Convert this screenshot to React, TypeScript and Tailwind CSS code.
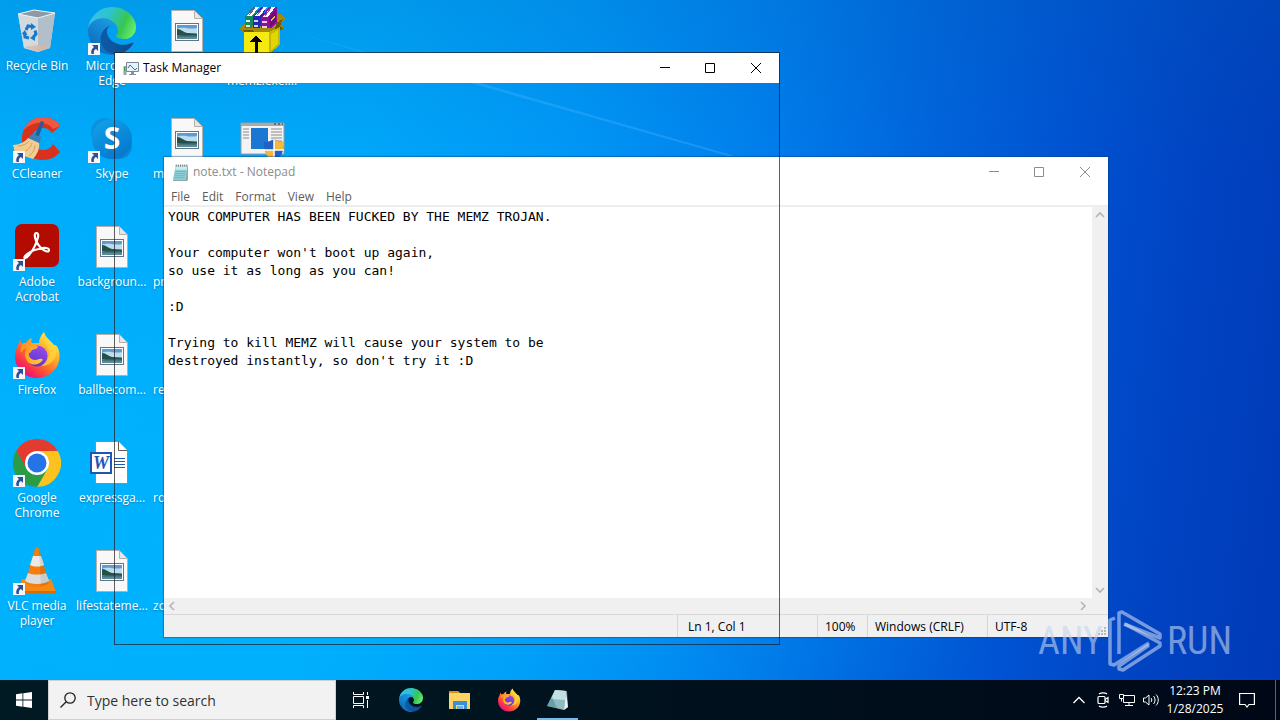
import React, { useState } from "react";

type IconProps = { className?: string };

/* ---------- Application icons ---------- */

function RecycleBinIcon({ className }: IconProps) {
  return (
    <svg viewBox="0 0 48 48" className={className} aria-hidden="true">
      <path d="M5 7 21 3 42 6 37 41 25 45 11 41z" fill="#c9d3da" />
      <path d="M5 7 25 11 25 45 11 41z" fill="#d3dade" />
      <path d="M25 11 42 6 37 41 25 45z" fill="#b3bfc8" />
      <path d="M5 7 21 3 42 6 25 11z" fill="#8d9aa5" stroke="#eef3f6" strokeWidth="1" />
      <path d="M11 40 25 38 37 40 25 45z" fill="#d9b8a4" opacity="0.8" />
      <g fill="none" stroke="#1878cf" strokeWidth="3">
        <path d="M13 23 15 19 18.500 19.500" />
        <path d="M22 23.500 23 27 20.500 30" />
        <path d="M16 31 12 30 11.500 27" />
      </g>
      <path d="M18 16 23 20 18 23zM22 27v7l-5-3zM8.500 27l3.500-4 2.500 5z" fill="#1878cf" />
    </svg>
  );
}

function EdgeIcon({ className }: IconProps) {
  return (
    <svg viewBox="0 0 256 256" className={className} aria-hidden="true">
      <defs>
        <linearGradient id="edge-a" x1="0.2" y1="0.5" x2="1" y2="0.5">
          <stop offset="0" stopColor="#0c59a4" />
          <stop offset="1" stopColor="#114a8b" />
        </linearGradient>
        <linearGradient id="edge-b" x1="0.8" y1="0.1" x2="0.2" y2="1">
          <stop offset="0" stopColor="#1b9de2" />
          <stop offset="0.5" stopColor="#1383d0" />
          <stop offset="1" stopColor="#0b62b4" />
        </linearGradient>
        <linearGradient id="edge-c" x1="0" y1="0.3" x2="1" y2="0.6">
          <stop offset="0" stopColor="#35c1f1" />
          <stop offset="0.4" stopColor="#2ec3c8" />
          <stop offset="0.75" stopColor="#36c752" />
          <stop offset="1" stopColor="#66eb6e" />
        </linearGradient>
      </defs>
      <path
        fill="url(#edge-a)"
        d="M235.680 190.530a93.730 93.730 0 01-10.540 4.710 101.870 101.870 0 01-35.900 6.460c-47.320 0-88.540-32.550-88.540-74.320 0-11.410 6.380-21.860 16.600-27.440-42.800 1.800-53.800 46.400-53.800 72.530 0 73.880 68.090 81.370 82.760 81.370 7.910 0 19.840-2.300 27-4.560l1.310-.44a128.340 128.340 0 0066.600-52.800 4 4 0 00-5.490-5.510z"
      />
      <path
        fill="url(#edge-b)"
        d="M105.730 241.420A79.200 79.200 0 0183 220.080a80.720 80.720 0 0129.500-120.450c3.120-1.470 8.450-4.130 15.540-4a32.350 32.350 0 0125.690 13 31.880 31.880 0 016.360 18.660c0-.21 24.460-79.600-80-79.600-43.900 0-80 41.660-80 78.210a130.150 130.150 0 0012.110 56 128 128 0 00156.380 67.110 75.550 75.550 0 01-62.780-8z"
      />
      <path
        fill="url(#edge-c)"
        d="M152.330 148.860c-.81 1.050-3.300 2.500-3.300 5.660 0 2.610 1.700 5.120 4.720 7.230 14.380 10 41.490 8.680 41.560 8.680a59.560 59.560 0 0030.270-8.350A61.380 61.380 0 00256 109.200c.26-22.410-8-37.310-11.340-43.910C223.460 23.840 177.720 0 128 0A128 128 0 000 126.200c.48-36.540 36.800-66.050 80-66.050 3.500 0 23.460.34 42 10.070 16.340 8.580 24.900 18.940 30.850 29.210 6.180 10.670 7.280 24.150 7.280 29.520s-2.740 13.330-7.800 19.910z"
      />
    </svg>
  );
}

function ImageFileIcon({ className }: IconProps) {
  return (
    <svg viewBox="0 0 48 48" className={className} aria-hidden="true">
      <path d="M8.500 3.500h23l8 8v33h-31z" fill="#f8f8f8" stroke="#b5b0aa" />
      <path d="M31.500 3.500v8h8z" fill="#e2e6ea" stroke="#b5b0aa" strokeLinejoin="round" />
      <rect x="12.500" y="16.500" width="23" height="17" fill="#fff" stroke="#5f7486" />
      <rect x="14" y="18" width="20" height="14" fill="#5e9cd0" />
      <path d="M14 22c6-3 13 1 20-1v5H14z" fill="#bcdcf0" />
      <path d="M14 22c4 0 6 3 10 4 4 0 7 1 10 1v1H14z" fill="#245049" />
      <path d="M14 28h20v4H14z" fill="#5b8a94" />
      <path d="M14 29c6-2 12 0 20-1v1.500H14z" fill="#2f6068" />
    </svg>
  );
}

function WinrarIcon({ className }: IconProps) {
  return (
    <svg viewBox="0 0 48 48" className={className} shapeRendering="crispEdges" aria-hidden="true">
      <path d="M2 22 8 15 42 7 47 12 42 17 46 20 38 26 8 26z" fill="#a58a05" />
      <path d="M4 23h10l3 3H8zM38 16l7-4-3 7 3 3-8 3z" fill="#6e5a00" />
      <path d="M7 10 15 0h5l-6 21H7z" fill="#178a5c" />
      <path d="M8 13h4v2H8zM8 18h4v2H8z" fill="#e8e8e8" />
      <path d="M15 10 23 0h5l-6 21h-7z" fill="#2229b8" />
      <path d="M16 13h4v2h-4zM16 18h4v2h-4z" fill="#d5d0ff" />
      <path d="M23 11 31 0h8v15l-6 6H23z" fill="#8d1196" />
      <path d="M24 14h5v2h-5zM24 19h5v2h-5z" fill="#f0c8f0" />
      <path d="M31 11 38 2v12l-6 7z" fill="#6c0d78" />
      <path d="M33 12l4-4v2l-4 4z" fill="#f0c040" />
      <path d="M9 9 17 0h4l-7 9zM17 9 25 0h4l-7 9zM25 10 33 0h4l-7 10z" fill="#fff" />
      <path d="M11 8 17 1M19 8 25 1M27 9 33 1" stroke="#8a5ab0" />
      <path d="M6 25h25v22H6z" fill="#f5ea10" />
      <path d="M31 25 42 20v18l-11 9z" fill="#c4b800" />
      <path d="M33 27 40 23v14l-7 6z" fill="#e3d600" />
      <path d="M17 47V35h-5l6-7 6 7h-4v12z" fill="#000" />
    </svg>
  );
}

function CCleanerIcon({ className }: IconProps) {
  return (
    <svg viewBox="0 0 48 48" className={className} aria-hidden="true">
      <path
        d="M47 11C43 5 37 2 30 2 18 2 9 12 9 24s9 21 20 21c8 0 14-3 18-8l-7-8c-2 4-6 6-10 6-6 0-11-5-11-11s5-11 11-11c4 0 7 2 9 5z"
        fill="#d8321f"
      />
      <path d="M47 11C43 5 37 2 30 2 20 2 13 8 10 16c6-7 14-9 20-8 5 1 8 3 10 6z" fill="#f0593f" />
      <path d="M28 6 31 7 25 24 21 22z" fill="#1f5f9e" />
      <path d="M20 19 28 22c0 4-2 6-3 7l-10-5c1-2 3-4 5-5z" fill="#3c7fb8" />
      <path d="M15 23 26 28c1 5-2 12-6 16L2 38l-2-8c6 0 12-3 15-7z" fill="#f2cd93" />
      <path d="M5 31c4 0 9-2 11-5M9 38c5-2 9-6 10-10M16 41c4-3 6-7 6-11" stroke="#d59f54" fill="none" />
    </svg>
  );
}

function SkypeIcon({ className }: IconProps) {
  return (
    <svg viewBox="0 0 48 48" className={className} aria-hidden="true">
      <defs>
        <linearGradient id="skype-a" x1="0" y1="0" x2="0.6" y2="1">
          <stop offset="0" stopColor="#12a5ea" />
          <stop offset="1" stopColor="#0579cf" />
        </linearGradient>
      </defs>
      <circle cx="17" cy="17" r="14" fill="#0a93dc" />
      <circle cx="31" cy="31" r="13" fill="#0a86d6" />
      <circle cx="24" cy="24" r="20" fill="url(#skype-a)" />
      <text
        x="24"
        y="34"
        textAnchor="middle"
        fill="#fff"
        className="font-['Open_Sans',sans-serif] text-[30px] font-bold"
      >
        S
      </text>
    </svg>
  );
}

function InstallerIcon({ className }: IconProps) {
  return (
    <svg viewBox="0 0 48 48" className={className} aria-hidden="true">
      <path d="M3 8h43v31H3z" fill="#f3f3f3" stroke="#9a9a9a" />
      <path d="M3 8h43v3H3z" fill="#a9a9a9" />
      <path d="M36 9h2M40 9h2M44 9h1" stroke="#333" />
      <path d="M5 14h6M5 17h6M5 20h6M5 23h6M33 14h11M33 17h11M33 20h11M33 23h11M33 26h11" stroke="#8b8b8b" />
      <path d="M13 13h17v21H13z" fill="#1b77d2" />
      <path d="M26 27c4 0 7-1 10-3 3 2 6 3 10 3 0 10-3 16-10 19-7-3-10-9-10-19z" fill="#2160c4" />
      <path d="M36 24c3 2 6 3 10 3 0 3 0 6-1 8h-9zM36 35v11c-6-3-8-6-9-11z" fill="#f5b73c" />
      <path d="M36 24v22M26 35h20" stroke="#fff" strokeWidth="1.500" />
    </svg>
  );
}

function AcrobatIcon({ className }: IconProps) {
  return (
    <svg viewBox="0 0 48 48" className={className} aria-hidden="true">
      <rect x="2" y="1" width="44" height="43" rx="7" fill="#b30b00" />
      <path
        d="M12 33c3-3 8-6 14-7 6-2 10-1 10 1 0 3-5 1-8-2-4-4-7-10-6-14 1-2 4-1 3 3-1 5-5 14-9 18-3 4-6 4-4 1z"
        fill="none"
        stroke="#fff"
        strokeWidth="2.200"
        strokeLinejoin="round"
      />
    </svg>
  );
}

function FirefoxIcon({ className }: IconProps) {
  return (
    <svg viewBox="0 0 48 48" className={className} aria-hidden="true">
      <defs>
        <linearGradient id="ff-a" x1="0.85" y1="0.1" x2="0.2" y2="0.9">
          <stop offset="0" stopColor="#fff44f" />
          <stop offset="0.3" stopColor="#ffb12c" />
          <stop offset="0.6" stopColor="#ff6a2a" />
          <stop offset="0.85" stopColor="#fb2c4f" />
          <stop offset="1" stopColor="#e31587" />
        </linearGradient>
        <linearGradient id="ff-b" x1="0.8" y1="0" x2="0.4" y2="1">
          <stop offset="0" stopColor="#9b4bf0" />
          <stop offset="1" stopColor="#5a36c8" />
        </linearGradient>
        <linearGradient id="ff-c" x1="0" y1="0" x2="1" y2="0.6">
          <stop offset="0" stopColor="#ff8a1e" />
          <stop offset="1" stopColor="#ffc13a" />
        </linearGradient>
      </defs>
      <path
        d="M31 1c1 5 6 8 10 13 3-1 6 6 5.500 12C46 38 36 47 24 47S2 38 2 25c0-4 1-7 3-10 0-2 1-4 3-6 0 2 0 3 1 4l4-1c1-2 3-4 6-5-1 2-1 4 0 5h7c0-4 2-8 5-11z"
        fill="url(#ff-a)"
      />
      <circle cx="24" cy="25" r="10.500" fill="url(#ff-b)" />
      <path
        d="M9 13c4-2 7-1 9 0 3 0 6 1 7 3-1 2-4 2-6 3-1 1-1 3-3 3-1 3 2 7 6 7 3 0 4-2 7-1 1 0 1 1 0 2-4 5-13 5-16-2-2-4-1-9 1-11-3 0-5 3-6 5-1-4 0-7 1-9z"
        fill="url(#ff-c)"
      />
      <path d="M31 1c-2 8 5 12 5 21 0 5-3 10-8 13 10 0 16-7 15-15 0-7-10-10-12-19z" fill="#ffd53c" opacity="0.75" />
    </svg>
  );
}

function ChromeIcon({ className }: IconProps) {
  return (
    <svg viewBox="0 0 48 48" className={className} aria-hidden="true">
      <path d="M24 12H44.800A24 24 0 0 0 3.200 12L13.600 30z" fill="#e33b2e" />
      <path d="M24 12H44.800A24 24 0 0 1 24 48L34.400 30z" fill="#fcc31e" />
      <path d="M13.600 30 3.200 12A24 24 0 0 0 24 48L34.400 30z" fill="#2a9c47" />
      <circle cx="24" cy="24" r="12" fill="#fff" />
      <circle cx="24" cy="24" r="9.500" fill="#2673e8" />
    </svg>
  );
}

function WordFileIcon({ className }: IconProps) {
  return (
    <svg viewBox="0 0 48 48" className={className} aria-hidden="true">
      <path d="M7.500 2.500h23l9 9v33h-32z" fill="#fff" stroke="#8b8b8b" />
      <path d="M30.500 2.500v9h9" fill="#fff" stroke="#6b5a50" />
      <path d="M26 19.500h11M26 22.500h11M26 25.500h11M26 28.500h11" stroke="#1f5bb5" />
      <rect x="3" y="14" width="20" height="20" fill="#fff" stroke="#1f56b3" strokeWidth="2" />
      <text
        x="13"
        y="30"
        textAnchor="middle"
        fill="#1f56b3"
        className="font-['Liberation_Serif',serif] text-[18px] font-bold italic"
      >
        W
      </text>
    </svg>
  );
}

function VlcIcon({ className }: IconProps) {
  return (
    <svg viewBox="0 0 48 48" className={className} aria-hidden="true">
      <path d="M9 32h29l5 13H5z" fill="#f58a12" />
      <path d="M5 44h38v2H5z" fill="#d96a00" />
      <path d="M22 2c1-2 3-2 4 0l10 34c-4 5-20 5-24 0z" fill="#f57c0d" />
      <path d="M20 9h8l3 9c-4 2-10 2-14 0z" fill="#e9e9e9" />
      <path d="M15 26c5 2 13 2 18 0l3 8c-5 4-19 4-24 0z" fill="#dcdcdc" />
      <path d="M26 2l10 34c-2 2-5 3-8 3z" fill="#000" opacity="0.08" />
    </svg>
  );
}

function NotepadIcon({ className }: IconProps) {
  return (
    <svg viewBox="0 0 16 16" className={className} aria-hidden="true">
      <path d="M4 2h11v13l-1 1H1z" fill="#3f6d73" opacity="0.6" />
      <path d="M3.500 1.500h11L13 15H.8z" fill="#8fd0d8" />
      <path d="M3.500 1.500h11l-.5 4H3z" fill="#c9ecef" />
      <path d="M3 7h10M2.700 9h10M2.400 11h10M2 13h10" stroke="#5aa9b4" strokeWidth="0.600" />
      <path d="M4 .5v2M6 .5v2M8 .5v2M10 .5v2M12 .5v2M14 .5v2" stroke="#5b6669" strokeWidth="0.800" />
    </svg>
  );
}

function NotepadTaskIcon({ className }: IconProps) {
  return (
    <svg viewBox="0 0 24 24" className={className} aria-hidden="true">
      <path d="M9 2 21 3l1 16-4 3z" fill="#5f7f86" />
      <path d="M9 2 20 3 18 22 1 18z" fill="#8dbcc2" />
      <path d="M9 2 20 3 19 12 5 11z" fill="#c2dfe2" />
      <path d="M1 18 6 9l5 11z" fill="#4f8d98" opacity="0.6" />
      <path d="M20 3l2 16-4 3z" fill="#e9f3f4" />
    </svg>
  );
}

function TaskManagerIcon({ className }: IconProps) {
  return (
    <svg viewBox="0 0 16 16" className={className} aria-hidden="true">
      <path d="M.5 6h3v9h-3z" fill="#9aa3a8" />
      <path d="M1 7h1v4H1z" fill="#37a64a" />
      <path d="M3.500 2.500h12v9h-12z" fill="#e6f3fa" stroke="#7a8891" />
      <path d="M5 8l2-3 3 3 2 2 2-2" fill="none" stroke="#1f7ab5" />
      <path d="M8 12h3v2h2v1H6v-1h2z" fill="#87929a" />
    </svg>
  );
}

function FolderIcon({ className }: IconProps) {
  return (
    <svg viewBox="0 0 24 24" className={className} aria-hidden="true">
      <path d="M1 3h9l2 2h10v3H1z" fill="#e5a323" />
      <path d="M1 5h21v16H1z" fill="#fcd462" />
      <path d="M1 3h9l2 2H1z" fill="#d9901a" />
      <path d="M5 13h14v8h-3v-4H8v4H5z" fill="#3b8fd6" />
      <path d="M9 18h6v3H9z" fill="#6fb3e6" />
    </svg>
  );
}

function ShortcutArrow() {
  return (
    <svg viewBox="0 0 12 12" className="absolute bottom-0 left-0 size-3" aria-hidden="true">
      <path d="M0 0h12v12H0z" fill="#f4f6fa" />
      <path d="M4 2h6v6L8 6C6 7 5.500 8.500 6 11H3.500C2.500 8 4 5.500 6 4z" fill="#2c4f96" />
    </svg>
  );
}

/* ---------- Desktop ---------- */

interface DesktopItem {
  label: string;
  Icon: React.ComponentType<IconProps>;
  shortcut?: boolean;
  alignStart?: boolean;
}

const DESKTOP_ITEMS: DesktopItem[] = [
  { label: "Recycle Bin", Icon: RecycleBinIcon },
  { label: "CCleaner", Icon: CCleanerIcon, shortcut: true },
  { label: "Adobe\nAcrobat", Icon: AcrobatIcon, shortcut: true },
  { label: "Firefox", Icon: FirefoxIcon, shortcut: true },
  { label: "Google\nChrome", Icon: ChromeIcon, shortcut: true },
  { label: "VLC media\nplayer", Icon: VlcIcon, shortcut: true },
  { label: "Microsoft\nEdge", Icon: EdgeIcon, shortcut: true },
  { label: "Skype", Icon: SkypeIcon, shortcut: true },
  { label: "backgroun...", Icon: ImageFileIcon },
  { label: "ballbecom...", Icon: ImageFileIcon },
  { label: "expressga...", Icon: WordFileIcon },
  { label: "lifestateme...", Icon: ImageFileIcon },
  { label: "", Icon: ImageFileIcon },
  { label: "m", Icon: ImageFileIcon, alignStart: true },
  { label: "pr", Icon: ImageFileIcon, alignStart: true },
  { label: "re", Icon: ImageFileIcon, alignStart: true },
  { label: "ro", Icon: ImageFileIcon, alignStart: true },
  { label: "zo", Icon: ImageFileIcon, alignStart: true },
  { label: "\nmemz.exe....", Icon: WinrarIcon },
  { label: "", Icon: InstallerIcon },
];

function DesktopIcon({ label, Icon, shortcut, alignStart }: DesktopItem) {
  return (
    <button className="flex flex-col items-center gap-[3px] pr-px pt-[7px]">
      <span className="relative size-12">
        <Icon className="size-12" />
        {shortcut && <ShortcutArrow />}
      </span>
      <span
        className={`whitespace-pre text-center text-xs/[15px] text-white [text-shadow:0_1px_2px_rgba(0,0,0,0.3)] ${
          alignStart ? "self-start pl-[3px]" : ""
        }`}
      >
        {label}
      </span>
    </button>
  );
}

function Wallpaper() {
  return (
    <div className="absolute inset-0 bg-[linear-gradient(97deg,#00aefc_0%,#00a9fc_28%,#0099f8_43%,#0080ee_57%,#0066de_69%,#0052d2_80%,#0043c2_90%,#003ab8_100%)]">
      <div className="absolute inset-0 bg-[linear-gradient(180deg,rgba(0,90,170,0.2)_0%,rgba(0,90,180,0)_26%)]" />
      <div className="absolute inset-0 bg-[radial-gradient(ellipse_60%_50%_at_20%_80%,rgba(0,190,255,0.45),rgba(0,190,255,0))]" />
      <svg viewBox="0 0 1280 680" className="absolute inset-0 h-full w-full" preserveAspectRatio="none" aria-hidden="true">
        <path d="M285 30 480 83 735 156 728 156 474 84z" fill="#3fb0ff" opacity="0.4" />
      </svg>
    </div>
  );
}

/* ---------- Windows ---------- */

function CaptionButtons() {
  return (
    <div className="flex h-full">
      <button aria-label="Minimize" className="flex w-[45px] items-center justify-center">
        <svg viewBox="0 0 10 10" className="size-[10px]" stroke="currentColor" fill="none">
          <path d="M0 4.500h10" />
        </svg>
      </button>
      <button aria-label="Maximize" className="flex w-[46px] items-center justify-center">
        <svg viewBox="0 0 10 10" className="size-[10px]" stroke="currentColor" fill="none">
          <path d="M.5.5h9v9h-9z" />
        </svg>
      </button>
      <button aria-label="Close" className="flex w-[46px] items-center justify-center">
        <svg viewBox="0 0 10 10" className="size-[10px]" stroke="currentColor" fill="none">
          <path d="M0 0 10 10M10 0 0 10" />
        </svg>
      </button>
    </div>
  );
}

function ScrollArrow({ d, label }: { d: string; label: string }) {
  return (
    <button aria-label={label} className="flex size-4 items-center justify-center text-[#b4b4b4]">
      <svg viewBox="0 0 10 10" className="size-[10px]" stroke="currentColor" strokeWidth="1.600" fill="none">
        <path d={d} />
      </svg>
    </button>
  );
}

const NOTE = `YOUR COMPUTER HAS BEEN FUCKED BY THE MEMZ TROJAN.

Your computer won't boot up again,
so use it as long as you can!

:D

Trying to kill MEMZ will cause your system to be
destroyed instantly, so don't try it :D`;

const MENUS = ["File", "Edit", "Format", "View", "Help"];

function NotepadWindow() {
  const [text, setText] = useState(NOTE);

  return (
    <section
      aria-label="Notepad"
      className="absolute left-[164px] top-[157px] flex h-[480px] w-[944px] flex-col bg-white shadow-[0_0_1px_1px_rgba(0,60,120,0.4)]"
    >
      <header className="flex h-[30px] shrink-0 items-center justify-between text-[#8c8c8c]">
        <div className="flex items-center gap-1 pl-2">
          <NotepadIcon className="size-[17px]" />
          <h1 className="text-xs">note.txt - Notepad</h1>
        </div>
        <CaptionButtons />
      </header>

      <nav className="flex h-5 shrink-0 border-b-2 border-[#eeeeee] pl-px text-xs/5 text-[#5c5c5c]">
        {MENUS.map((menu) => (
          <button key={menu} className="px-[6px]">
            {menu}
          </button>
        ))}
      </nav>

      <div className="flex min-h-0 flex-1">
        <textarea
          aria-label="Document"
          wrap="off"
          spellCheck={false}
          value={text}
          onChange={(e) => setText(e.target.value)}
          className="flex-1 resize-none overflow-hidden pl-1 pt-px font-['DejaVu_Sans_Mono',monospace] text-[13px]/[18px] text-black outline-none"
        />
        <div className="flex w-4 flex-col justify-between bg-[#f0f0f0]">
          <ScrollArrow label="Scroll up" d="M1 7l4-4 4 4" />
          <ScrollArrow label="Scroll down" d="M1 3l4 4 4-4" />
        </div>
      </div>
      <div className="flex h-4 shrink-0 justify-between bg-[#f0f0f0] pr-[17px]">
        <ScrollArrow label="Scroll left" d="M7 1 3 5l4 4" />
        <ScrollArrow label="Scroll right" d="M3 1l4 4-4 4" />
      </div>

      <footer className="flex h-[23px] shrink-0 justify-end border-t border-[#d9d9d9] bg-[#f0f0f0] text-xs/6 text-black">
        <span className="w-[140px] border-l border-[#d5d5d5] pl-[10px]">Ln 1, Col 1</span>
        <span className="w-[50px] border-l border-[#d5d5d5] pl-[7px]">100%</span>
        <span className="w-[120px] border-l border-[#d5d5d5] pl-[7px]">Windows (CRLF)</span>
        <span className="flex w-[121px] justify-between border-l border-[#d5d5d5] pl-[7px]">
          UTF-8
          <svg viewBox="0 0 10 10" className="size-[10px] self-end" fill="#b8b8b8" aria-hidden="true">
            <path d="M6 0h2v2H6zM3 3h2v2H3zM6 3h2v2H6zM0 6h2v2H0zM3 6h2v2H3zM6 6h2v2H6z" />
          </svg>
        </span>
      </footer>
    </section>
  );
}

function TaskManagerWindow() {
  return (
    <section
      aria-label="Task Manager"
      className="absolute left-[114px] top-[52px] h-[593px] w-[666px] border border-[#1c1c24]/70"
    >
      <header className="flex h-[30px] items-center justify-between bg-white text-black">
        <div className="flex items-center gap-1 pl-2">
          <TaskManagerIcon className="size-4" />
          <h1 className="text-xs">Task Manager</h1>
        </div>
        <CaptionButtons />
      </header>
    </section>
  );
}

function Watermark() {
  return (
    <div className="pointer-events-none absolute bottom-2 right-12 flex items-center gap-1 font-['Liberation_Sans_Narrow','Roboto_Condensed','DejaVu_Sans_Condensed',sans-serif] text-[38px]/[60px] text-[#c4d4ee]/60">
      <span>ANY</span>
      <svg
        viewBox="0 0 56 62"
        className="h-[62px] w-14"
        fill="none"
        stroke="currentColor"
        strokeWidth="3.500"
        strokeLinejoin="round"
        aria-hidden="true"
      >
        <path d="M8 8 3 10v44l4 1 35-22" />
        <path d="M12 44V3l3-1 38 22v4L17 14" />
        <path d="M18 14 53 33v3L16 60l-4-1v-3L42 35" />
      </svg>
      <span>RUN</span>
    </div>
  );
}

/* ---------- Taskbar ---------- */

const PINNED = [
  { name: "Microsoft Edge", Icon: EdgeIcon, open: false },
  { name: "File Explorer", Icon: FolderIcon, open: false },
  { name: "Firefox", Icon: FirefoxIcon, open: false },
  { name: "Notepad", Icon: NotepadTaskIcon, open: true },
];

function Taskbar() {
  return (
    <footer className="flex h-10 shrink-0 items-stretch bg-gradient-to-r from-[#001a24] via-[#00121e] to-[#000818] text-white">
      <button aria-label="Start" className="flex w-12 items-center justify-center">
        <svg viewBox="0 0 16 16" className="size-4" fill="#fff">
          <path d="M0 2.200 6.500 1.300v6.300H0zM7.300 1.200 16 0v7.600H7.300zM0 8.400h6.500v6.300L0 13.800zM7.300 8.400H16V16l-8.700-1.200z" />
        </svg>
      </button>
      <label className="flex w-72 items-center gap-[11px] border border-[#d0d0d0] bg-[#f2f2f2] pl-[11px] text-[#222]">
        <svg viewBox="0 0 16 16" className="size-4 shrink-0" fill="none" stroke="currentColor" strokeWidth="1.300">
          <circle cx="10" cy="6" r="5.200" />
          <path d="M6.200 9.800.5 15.500" />
        </svg>
        <input
          type="text"
          aria-label="Search"
          placeholder="Type here to search"
          className="min-w-0 flex-1 bg-transparent pt-px text-sm outline-none placeholder:text-[#333]"
        />
      </label>
      <button aria-label="Task View" className="flex w-[50px] items-center justify-center">
        <svg viewBox="0 0 16 16" className="size-4" fill="none" stroke="#fff">
          <path d="M.5 0v2.500h10V0M.5 16v-2.500h10V16M.5 4.500h10v7H.5zM14.500 0v3M14.500 8v8" />
          <path d="M13 4h3v3h-3z" fill="#fff" stroke="none" />
        </svg>
      </button>
      {PINNED.map(({ name, Icon, open }) => (
        <button key={name} aria-label={name} className="relative flex w-[49px] items-center justify-center">
          <Icon className="size-6" />
          {open && <span className="absolute inset-x-1 bottom-0 h-[2px] bg-[#76b9ed]" />}
        </button>
      ))}

      <div className="ml-auto flex items-center">
        <button aria-label="Show hidden icons" className="flex w-6 justify-center">
          <svg viewBox="0 0 16 16" className="size-4" fill="none" stroke="#fff" strokeWidth="1.300">
            <path d="M2.500 11 8 5.500 13.500 11" />
          </svg>
        </button>
        <button aria-label="Meet Now" className="flex w-6 justify-center">
          <svg viewBox="0 0 16 16" className="size-4" fill="none" stroke="#fff" strokeWidth="1.200">
            <rect x="3" y="4.500" width="7" height="7" rx="1" />
            <path d="M10 7.500 13 5.500v5L10 8.500M4 2c2-1.500 6-1.500 8 0M4 14c2 1.500 6 1.500 8 0" />
          </svg>
        </button>
        <button aria-label="Network" className="flex w-6 justify-center">
          <svg viewBox="0 0 16 16" className="size-4" fill="none" stroke="#fff">
            <path d="M5 3.500h10.500v7H4.500V7M10 10.500v3M6 13.500h8M.5 2.500h4v4h-4zM2.500 6.500v3" />
          </svg>
        </button>
        <button aria-label="Volume" className="flex w-6 justify-center">
          <svg viewBox="0 0 16 16" className="size-4" fill="none" stroke="#fff">
            <path d="M.5 6v4h2L6 13V3L2.500 6zM8 6c1 1 1 3 0 4M10.500 4c2 2.500 2 5.500 0 8M13 2.500c3 3 3 8 0 11" />
          </svg>
        </button>
        <time dateTime="2025-01-28T12:23" className="w-16 text-center text-xs/[18px]">
          12:23 PM
          <br />
          1/28/2025
        </time>
        <button aria-label="Notifications" className="flex w-10 justify-center">
          <svg viewBox="0 0 16 16" className="size-4" fill="none" stroke="#fff" strokeWidth="1.200">
            <path d="M.6 1.500h14.800v11H10l-2 2.500-2-2.500H.6z" />
          </svg>
        </button>
        <button aria-label="Show desktop" className="ml-2 h-10 w-[5px] border-l border-[#5a6370]" />
      </div>
    </footer>
  );
}

export default function App() {
  return (
    <div className="flex h-screen flex-col overflow-hidden font-['Open_Sans','Noto_Sans',sans-serif]">
      <main className="relative min-h-0 flex-1 overflow-hidden">
        <Wallpaper />
        <div className="relative grid auto-cols-[75px] grid-flow-col grid-rows-[repeat(6,108px)]">
          {DESKTOP_ITEMS.map((item, i) => (
            <DesktopIcon key={i} {...item} />
          ))}
        </div>
        <NotepadWindow />
        <TaskManagerWindow />
        <Watermark />
      </main>
      <Taskbar />
    </div>
  );
}
